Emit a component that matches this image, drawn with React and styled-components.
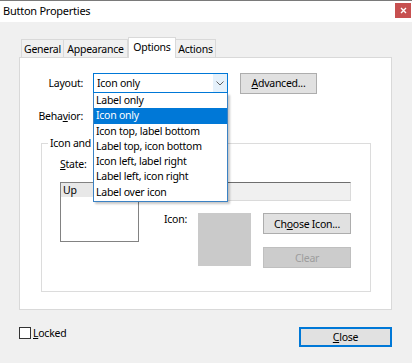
import React from 'react';
import styled, { createGlobalStyle } from 'styled-components';

const GlobalStyle = createGlobalStyle`
  html, body {
    margin: 0;
    padding: 0;
    background: #f0f0f0;
  }
  body {
    font-family: "Noto Sans", "Open Sans", sans-serif;
    font-size: 10.5px;
    letter-spacing: -0.25px;
    color: #000;
  }
  * {
    box-sizing: border-box;
  }
`;

const LAYOUTS = [
  'Label only',
  'Icon only',
  'Icon top, label bottom',
  'Label top, icon bottom',
  'Icon left, label right',
  'Label left, icon right',
  'Label over icon',
];

const TABS = [
  { name: 'General', w: 43 },
  { name: 'Appearance', w: 64 },
  { name: 'Options', w: 48 },
  { name: 'Actions', w: 40 },
];

const App = () => {
  const selected = 'Icon only';

  return (
    <Window>
      <GlobalStyle />
      <TitleBar>
        <Title>Button Properties</Title>
        <CloseBox>
          <svg width="7" height="7" viewBox="0 0 7 7">
            <path d="M1 1l5 5M6 1l-5 5" stroke="#fff" strokeWidth="1.4" />
          </svg>
        </CloseBox>
      </TitleBar>

      <Content>
        <TabRow>
          {TABS.map(t => (
            <Tab key={t.name} $w={t.w} $active={t.name === 'Options'}>
              {t.name}
            </Tab>
          ))}
        </TabRow>

        <Panel>
          <FormRow>
            <FieldName>Layout:</FieldName>
            <SelectWrap>
              <Select $focused>
                <span>{selected}</span>
                <ArrowZone $focused>
                  <svg width="8" height="5" viewBox="0 0 8 5">
                    <path d="M0.5 0.5l3.5 3.5 3.5-3.5" stroke="#606060" fill="none" />
                  </svg>
                </ArrowZone>
              </Select>
              <DropList>
                {LAYOUTS.map(l => (
                  <Option key={l} $active={l === selected}>{l}</Option>
                ))}
              </DropList>
            </SelectWrap>
            <PushButton $w={77} $gap={12}><Key>A</Key>dvanced...</PushButton>
          </FormRow>

          <FormRow>
            <FieldName>Beha<Key>v</Key>ior:</FieldName>
            <SelectWrap>
              <Select>
                <ArrowZone />
              </Select>
            </SelectWrap>
          </FormRow>

          <Group>
            <Legend>Icon and Label</Legend>
            <GroupGrid>
              <span><Key>S</Key>tate:</span>
              <span />
              <ListBox>
                <ListItem $active>Up</ListItem>
              </ListBox>
              <RightCol>
                <InlineRow>
                  <SmallLabel>Label:</SmallLabel>
                  <TextInput />
                </InlineRow>
                <IconRow>
                  <SmallLabel>Icon:</SmallLabel>
                  <Preview />
                  <ButtonCol>
                    <PushButton $w={88}>Ch<Key>o</Key>ose Icon...</PushButton>
                    <PushButton $w={88} disabled>Clear</PushButton>
                  </ButtonCol>
                </IconRow>
              </RightCol>
            </GroupGrid>
          </Group>
        </Panel>

        <Footer>
          <CheckLabel>
            <CheckBox />
            <span><Key>L</Key>ocked</span>
          </CheckLabel>
          <DefaultButton><Key>C</Key>lose</DefaultButton>
        </Footer>
      </Content>
    </Window>
  );
};

const Window = styled.div`
  width: 412px;
  height: 363px;
  display: flex;
  flex-direction: column;
  background: #f0f0f0;
  overflow: hidden;
`;

const TitleBar = styled.div`
  flex: none;
  height: 22px;
  display: flex;
  align-items: flex-start;
  justify-content: space-between;
  padding: 2px 1px 0 3px;
  background: #fff;
  border-top: 1px solid #7a7a7a;
`;

const Title = styled.span`
  font-size: 11px;
  line-height: 16px;
`;

const CloseBox = styled.div`
  width: 16px;
  height: 15px;
  display: flex;
  align-items: center;
  justify-content: center;
  background: #c75050;
`;

const Content = styled.div`
  flex: 1;
  display: flex;
  flex-direction: column;
  padding: 15px 20px 0 19px;
`;

const TabRow = styled.div`
  height: 20px;
  display: flex;
  align-items: flex-end;
  padding-left: 2px;
  position: relative;
  z-index: 2;
`;

const Tab = styled.div`
  width: ${p => p.$w}px;
  height: ${p => (p.$active ? 21 : 18)}px;
  margin-bottom: ${p => (p.$active ? -1 : 0)}px;
  display: flex;
  align-items: center;
  justify-content: center;
  padding-bottom: ${p => (p.$active ? 3 : 0)}px;
  background: ${p => (p.$active ? '#fff' : '#f0f0f0')};
  border: 1px solid #d9d9d9;
  border-bottom: none;
  border-left-width: ${p => (p.$active ? 1 : 0)}px;
  &:first-child {
    border-left-width: 1px;
  }
`;

const Panel = styled.div`
  height: 253px;
  display: flex;
  flex-direction: column;
  gap: 13px;
  padding-top: 15px;
  background: #fff;
  border: 1px solid #d9d9d9;
`;

const FormRow = styled.div`
  height: 20px;
  display: flex;
  align-items: center;
`;

const FieldName = styled.span`
  width: 63px;
  margin-right: 10px;
  text-align: right;
`;

const Key = styled.u`
  text-decoration-thickness: 1px;
  text-underline-offset: 1px;
`;

const SelectWrap = styled.div`
  position: relative;
  width: 135px;
  height: 20px;
`;

const Select = styled.div`
  height: 100%;
  display: flex;
  align-items: center;
  padding-left: 3px;
  background: ${p => (p.$focused ? '#fff' : '#e1e1e1')};
  border: 1px solid ${p => (p.$focused ? '#0078d7' : '#adadad')};
`;

const ArrowZone = styled.div`
  margin-left: auto;
  width: 14px;
  height: 100%;
  display: flex;
  align-items: center;
  justify-content: center;
  background: ${p => (p.$focused ? '#e5f1fb' : 'transparent')};
`;

const DropList = styled.div`
  position: absolute;
  top: 100%;
  left: 0;
  width: 100%;
  z-index: 10;
  padding: 0 0 1px;
  background: #fff;
  border: 1px solid #3b82c4;
  border-top: none;
  box-shadow: 2px 2px 2px rgba(0, 0, 0, 0.22);
`;

const Option = styled.div`
  height: 15.3px;
  line-height: 15.3px;
  padding-left: 2px;
  white-space: nowrap;
  background: ${p => (p.$active ? '#0078d7' : 'transparent')};
  color: ${p => (p.$active ? '#fff' : '#000')};
`;

const PushButton = styled.div`
  width: ${p => p.$w}px;
  height: 21px;
  margin-left: ${p => p.$gap || 0}px;
  display: flex;
  align-items: center;
  justify-content: center;
  background: ${p => (p.disabled ? '#cccccc' : '#e1e1e1')};
  border: 1px solid ${p => (p.disabled ? '#bfbfbf' : '#adadad')};
  color: ${p => (p.disabled ? '#9d9d9d' : '#000')};
`;

const Group = styled.fieldset`
  margin: -3px 20px 0 21px;
  padding: 0 0 23px 6px;
  min-width: 0;
  border: 1px solid #dcdcdc;
`;

const Legend = styled.legend`
  padding: 0 2px;
  line-height: 14px;
`;

const GroupGrid = styled.div`
  display: grid;
  grid-template-columns: 79px auto;
  grid-template-rows: 14px auto;
  column-gap: 25px;
  row-gap: 11px;
  padding: 7px 0 0 12px;
  line-height: 14px;
`;

const ListBox = styled.div`
  width: 79px;
  height: 60px;
  border: 1px solid #828282;
  background: #fff;
`;

const ListItem = styled.div`
  height: 14px;
  line-height: 14px;
  padding-left: 2px;
  background: ${p => (p.$active ? '#e8e8e8' : 'transparent')};
`;

const RightCol = styled.div`
  display: flex;
  flex-direction: column;
`;

const InlineRow = styled.div`
  display: flex;
  align-items: center;
`;

const SmallLabel = styled.span`
  width: 34px;
  line-height: 12px;
`;

const TextInput = styled.div`
  width: 153px;
  height: 19px;
  background: #f0f0f0;
  border: 1px solid #dadada;
  border-top: 1px solid #6e6e6e;
`;

const IconRow = styled.div`
  display: flex;
  align-items: flex-start;
  margin-top: 12px;
`;

const Preview = styled.div`
  width: 53px;
  height: 53px;
  background: #cacaca;
`;

const ButtonCol = styled.div`
  display: flex;
  flex-direction: column;
  gap: 13px;
  margin-left: 12px;
`;

const Footer = styled.div`
  display: flex;
  align-items: flex-start;
  justify-content: space-between;
  margin-top: 17px;
`;

const CheckLabel = styled.label`
  display: flex;
  align-items: center;
  gap: 2px;
  line-height: 12px;
`;

const CheckBox = styled.span`
  width: 12px;
  height: 12px;
  background: #fff;
  border: 1px solid #333;
`;

const DefaultButton = styled.div`
  width: 93px;
  height: 20px;
  display: flex;
  align-items: center;
  justify-content: center;
  background: #e1e1e1;
  border: 1px solid #0078d7;
  box-shadow: inset 0 0 0 1px #0078d7;
`;

export default App;
